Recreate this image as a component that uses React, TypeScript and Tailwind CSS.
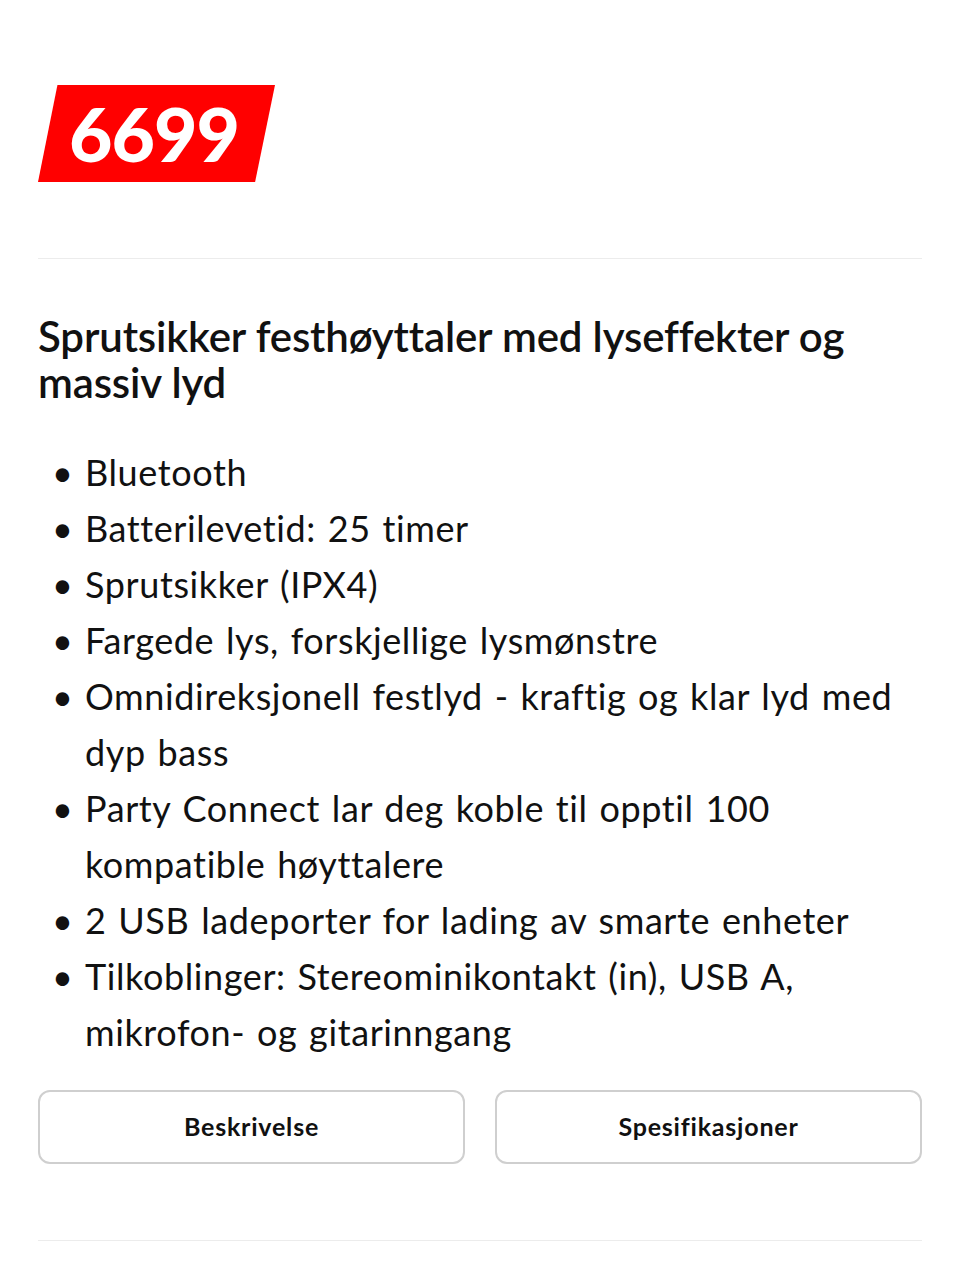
import React from "react";

const items: string[] = [
  "Bluetooth",
  "Batterilevetid: 25 timer",
  "Sprutsikker (IPX4)",
  "Fargede lys, forskjellige lysmønstre",
  "Omnidireksjonell festlyd - kraftig og klar lyd med dyp bass",
  "Party Connect lar deg koble til opptil 100 kompatible høyttalere",
  "2 USB ladeporter for lading av smarte enheter",
  "Tilkoblinger: Stereominikontakt (in), USB A, mikrofon- og gitarinngang",
];

export default function App() {
  return (
    <div className="min-h-[1287px] w-[960px] bg-white px-[38px] text-[#111] font-['Lato',sans-serif]">
      <div className="pt-[85px] pb-[76px]">
        <div className="flex h-[97px] w-[237px] items-center bg-[#f00] pl-[31px] [clip-path:polygon(8.2%_0,100%_0,91.6%_100%,0_100%)]">
          <span className="text-[75px] font-black leading-none tracking-[-1px] text-white">6699</span>
        </div>
      </div>
      <div className="h-px bg-[#ececec]" />
      <h1 className="mt-[54px] text-[42px] font-semibold leading-[46px] tracking-[-0.15px]">
        Sprutsikker festhøyttaler med lyseffekter og massiv lyd
      </h1>
      <ul className="mt-[39px] flex flex-col">
        {items.map((t) => (
          <li key={t} className="flex text-[36px] leading-[56px] tracking-[0.6px] [word-spacing:2px]">
            <span className="w-[47px] shrink-0 pl-[14px]">•</span>
            <span>{t}</span>
          </li>
        ))}
      </ul>
      <div className="mt-[30px] grid grid-cols-2 gap-[30px]">
        <button className="h-[74px] rounded-[12px] border-2 border-[#cfcfcf] text-[25px] font-bold tracking-[0.8px]">
          Beskrivelse
        </button>
        <button className="h-[74px] rounded-[12px] border-2 border-[#cfcfcf] text-[25px] font-bold tracking-[0.8px]">
          Spesifikasjoner
        </button>
      </div>
      <div className="mt-[76px] h-px bg-[#ececec]" />
    </div>
  );
}
